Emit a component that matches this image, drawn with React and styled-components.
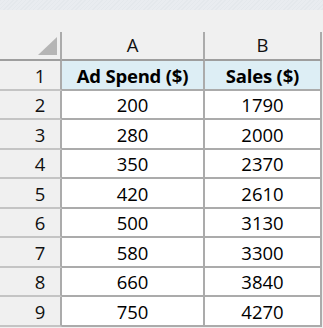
import React from "react";
import styled, { createGlobalStyle } from "styled-components";

const GlobalStyle = createGlobalStyle`
  html, body {
    margin: 0;
    padding: 0;
    background: #f0f0f0;
  }
  body {
    font-family: "Open Sans", "Noto Sans", sans-serif;
    overflow: hidden;
  }
`;

const Page = styled.div`
  width: 323px;
  height: 328px;
  background: #f0f0f0;
  overflow: hidden;
`;

const Ribbon = styled.div`
  height: 10px;
  background: repeating-linear-gradient(
    135deg,
    #e4e8ec 0px,
    #e4e8ec 1px,
    #e9ecf0 1px,
    #e9ecf0 3px
  );
`;

const Gap = styled.div`
  height: 22px;
`;

const Sheet = styled.div`
  display: grid;
  grid-template-columns: 62px 143px 117px;
  grid-template-rows: 29px;
  grid-auto-rows: 29.5px;
`;

const Cell = styled.div`
  box-sizing: border-box;
  display: flex;
  align-items: flex-end;
  justify-content: center;
  padding-bottom: 2px;
  border-right: 2px solid #ababab;
  border-bottom: 2px solid #ababab;
  font-size: 18.5px;
  line-height: 22px;
  color: #000;
  background: ${(p) => (p.$head ? "#ddeef5" : "#fff")};
  font-weight: ${(p) => (p.$head ? 700 : 400)};
  letter-spacing: ${(p) => (p.$head ? "-0.2px" : "0")};
`;

const ColHead = styled(Cell)`
  background: #f0f0f0;
  border-bottom-color: #9e9e9e;
  color: #111;
  font-weight: 400;
  padding-bottom: 3px;
`;

const RowHead = styled(Cell)`
  background: #f0f0f0;
  border-bottom-color: #c4c4c4;
  padding-left: 20px;
  color: #111;
  font-weight: 400;
`;

const Corner = styled(ColHead)`
  position: relative;
  &::after {
    content: "";
    position: absolute;
    right: 3px;
    bottom: 4px;
    width: 0;
    height: 0;
    border-left: 19px solid transparent;
    border-bottom: 18px solid #b5b5b5;
  }
`;

const rows = [
  ["Ad Spend ($)", "Sales ($)"],
  [200, 1790],
  [280, 2000],
  [350, 2370],
  [420, 2610],
  [500, 3130],
  [580, 3300],
  [660, 3840],
  [750, 4270],
];

export default function App() {
  return (
    <Page>
      <GlobalStyle />
      <Ribbon />
      <Gap />
      <Sheet>
        <Corner />
        <ColHead>A</ColHead>
        <ColHead>B</ColHead>
        {rows.map((r, i) => (
          <React.Fragment key={i}>
            <RowHead>{i + 1}</RowHead>
            <Cell $head={i === 0}>{r[0]}</Cell>
            <Cell $head={i === 0}>{r[1]}</Cell>
          </React.Fragment>
        ))}
      </Sheet>
    </Page>
  );
}
